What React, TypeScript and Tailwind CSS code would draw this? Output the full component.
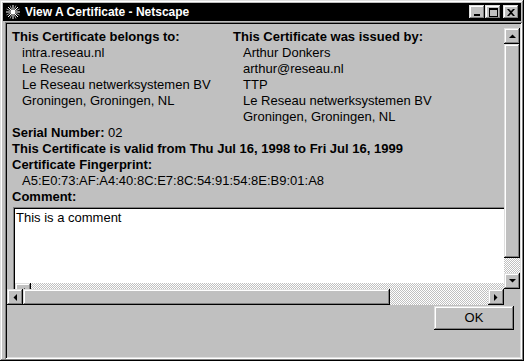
import React from 'react';

// win95 bevels
const raised =
  'shadow-[inset_-1px_-1px_#000,inset_1px_1px_#dfdfdf,inset_-2px_-2px_#808080,inset_2px_2px_#fff]';
const sunken =
  'shadow-[inset_1px_1px_#808080,inset_-1px_-1px_#fff,inset_2px_2px_#000,inset_-2px_-2px_#dfdfdf]';
const checker =
  'bg-[repeating-conic-gradient(#c0c0c0_0%_25%,#ffffff_0%_50%)] bg-[length:2px_2px]';

type Dir = 'up' | 'down' | 'left' | 'right';

function Arrow({ dir }: { dir: Dir }) {
  const pts: Record<Dir, string> = {
    up: '0,4 7,4 3.5,0.5',
    down: '0,0 7,0 3.5,3.5',
    left: '4,0 4,7 0.5,3.5',
    right: '0,0 0,7 3.5,3.5',
  };
  const vertical = dir === 'up' || dir === 'down';
  return (
    <svg width={vertical ? 7 : 4} height={vertical ? 4 : 7} viewBox={vertical ? '0 0 7 4' : '0 0 4 7'}>
      <polygon points={pts[dir]} fill="#000" />
    </svg>
  );
}

function ScrollBtn({ dir }: { dir: Dir }) {
  return (
    <div className={`w-4 h-4 shrink-0 bg-[#c0c0c0] flex items-center justify-center ${raised}`}>
      <Arrow dir={dir} />
    </div>
  );
}

function NetscapeIcon() {
  return (
    <svg width="16" height="16" viewBox="0 0 16 16">
      <g stroke="#fff" strokeWidth="1">
        <line x1="8" y1="1" x2="8" y2="15" />
        <line x1="1" y1="8" x2="15" y2="8" />
        <line x1="3" y1="3" x2="13" y2="13" />
        <line x1="13" y1="3" x2="3" y2="13" />
      </g>
      <g stroke="#9a9a9a" strokeWidth="1">
        <line x1="5" y1="1.5" x2="11" y2="14.5" />
        <line x1="11" y1="1.5" x2="5" y2="14.5" />
        <line x1="1.5" y1="5" x2="14.5" y2="11" />
        <line x1="1.5" y1="11" x2="14.5" y2="5" />
      </g>
      <rect x="6" y="6" width="4" height="4" fill="#fff" />
    </svg>
  );
}

function TitleButton({ children }: { children: React.ReactNode }) {
  return (
    <div className={`w-4 h-[14px] bg-[#c0c0c0] flex items-center justify-center ${raised}`}>
      {children}
    </div>
  );
}

function TitleBar() {
  return (
    <div className="mx-[1px] mt-[1px] h-[18px] bg-black flex items-center pl-[2px] pr-[2px]">
      <NetscapeIcon />
      <span className="ml-[4px] text-white font-bold text-[12px] leading-none">
        View A Certificate - Netscape
      </span>
      <div className="ml-auto flex items-center">
        <TitleButton>
          <div className="w-[6px] h-[2px] bg-black mt-[6px]" />
        </TitleButton>
        <TitleButton>
          <div className="w-[9px] h-[9px] border border-black border-t-2" />
        </TitleButton>
        <div className="w-[2px]" />
        <TitleButton>
          <svg width="8" height="7" viewBox="0 0 8 7">
            <path d="M0 0h2l2 2 2-2h2L5 3.5 8 7H6L4 5 2 7H0l3-3.5z" fill="#000" />
          </svg>
        </TitleButton>
      </div>
    </div>
  );
}

const belongs = ['intra.reseau.nl', 'Le Reseau', 'Le Reseau netwerksystemen BV', 'Groningen, Groningen, NL'];
const issuer = ['Arthur Donkers', 'arthur@reseau.nl', 'TTP', 'Le Reseau netwerksystemen BV', 'Groningen, Groningen, NL'];

function Page() {
  return (
    <div className="pl-[5px] pt-[1px] text-[13px] leading-[16px] text-black">
      <div className="flex">
        <div className="w-[221px]">
          <div className="font-bold">This Certificate belongs to:</div>
          {belongs.map((l) => (
            <div key={l} className="pl-[10px]">{l}</div>
          ))}
        </div>
        <div>
          <div className="font-bold">This Certificate was issued by:</div>
          {issuer.map((l) => (
            <div key={l} className="pl-[10px]">{l}</div>
          ))}
        </div>
      </div>
      <div>
        <span className="font-bold">Serial Number:</span> 02
      </div>
      <div className="font-bold">This Certificate is valid from Thu Jul 16, 1998 to Fri Jul 16, 1999</div>
      <div className="font-bold">Certificate Fingerprint:</div>
      <div className="pl-[10px]">A5:E0:73:AF:A4:40:8C:E7:8C:54:91:54:8E:B9:01:A8</div>
      <div className="font-bold">Comment:</div>
      {/* textarea, cut off by the viewport */}
      <div className={`ml-[1px] mt-[2px] w-[620px] h-[110px] bg-white p-[2px] ${sunken}`}>
        <div className="h-[74px] pl-[1px] pt-[1px]">This is a comment</div>
        <div className="flex">
          <ScrollBtn dir="left" />
          <div className={`flex-1 h-4 ${checker}`} />
        </div>
      </div>
    </div>
  );
}

export default function App() {
  return (
    <div
      className={`w-[524px] h-[361px] bg-[#c0c0c0] p-[2px] flex flex-col font-['Liberation_Sans',Arial,sans-serif] shadow-[inset_-1px_-1px_#000,inset_1px_1px_#dfdfdf,inset_-2px_-2px_#808080,inset_2px_2px_#fff]`}
    >
      <TitleBar />
      <div className={`ml-[3px] mt-[1px] flex-1 flex flex-col p-[2px] ${sunken}`}>
        <div className="flex h-[261px] mt-[4px]">
          <div className="flex-1 overflow-hidden">
            <Page />
          </div>
          <div className="w-4 flex flex-col">
            <ScrollBtn dir="up" />
            <div className={`flex-1 bg-[#c0c0c0] ${raised}`} />
            <div className={`h-[15px] ${checker}`} />
            <ScrollBtn dir="down" />
          </div>
        </div>
        <div className="flex h-4">
          <ScrollBtn dir="left" />
          <div className={`w-[367px] bg-[#c0c0c0] ${raised}`} />
          <div className={`flex-1 ${checker}`} />
          <ScrollBtn dir="right" />
          <div className="w-4" />
        </div>
        <div className="flex justify-end mt-[1px] pr-[6px]">
          <button
            className={`w-[80px] h-[24px] bg-[#c0c0c0] text-[13px] text-black ${raised}`}
          >
            OK
          </button>
        </div>
      </div>
    </div>
  );
}
